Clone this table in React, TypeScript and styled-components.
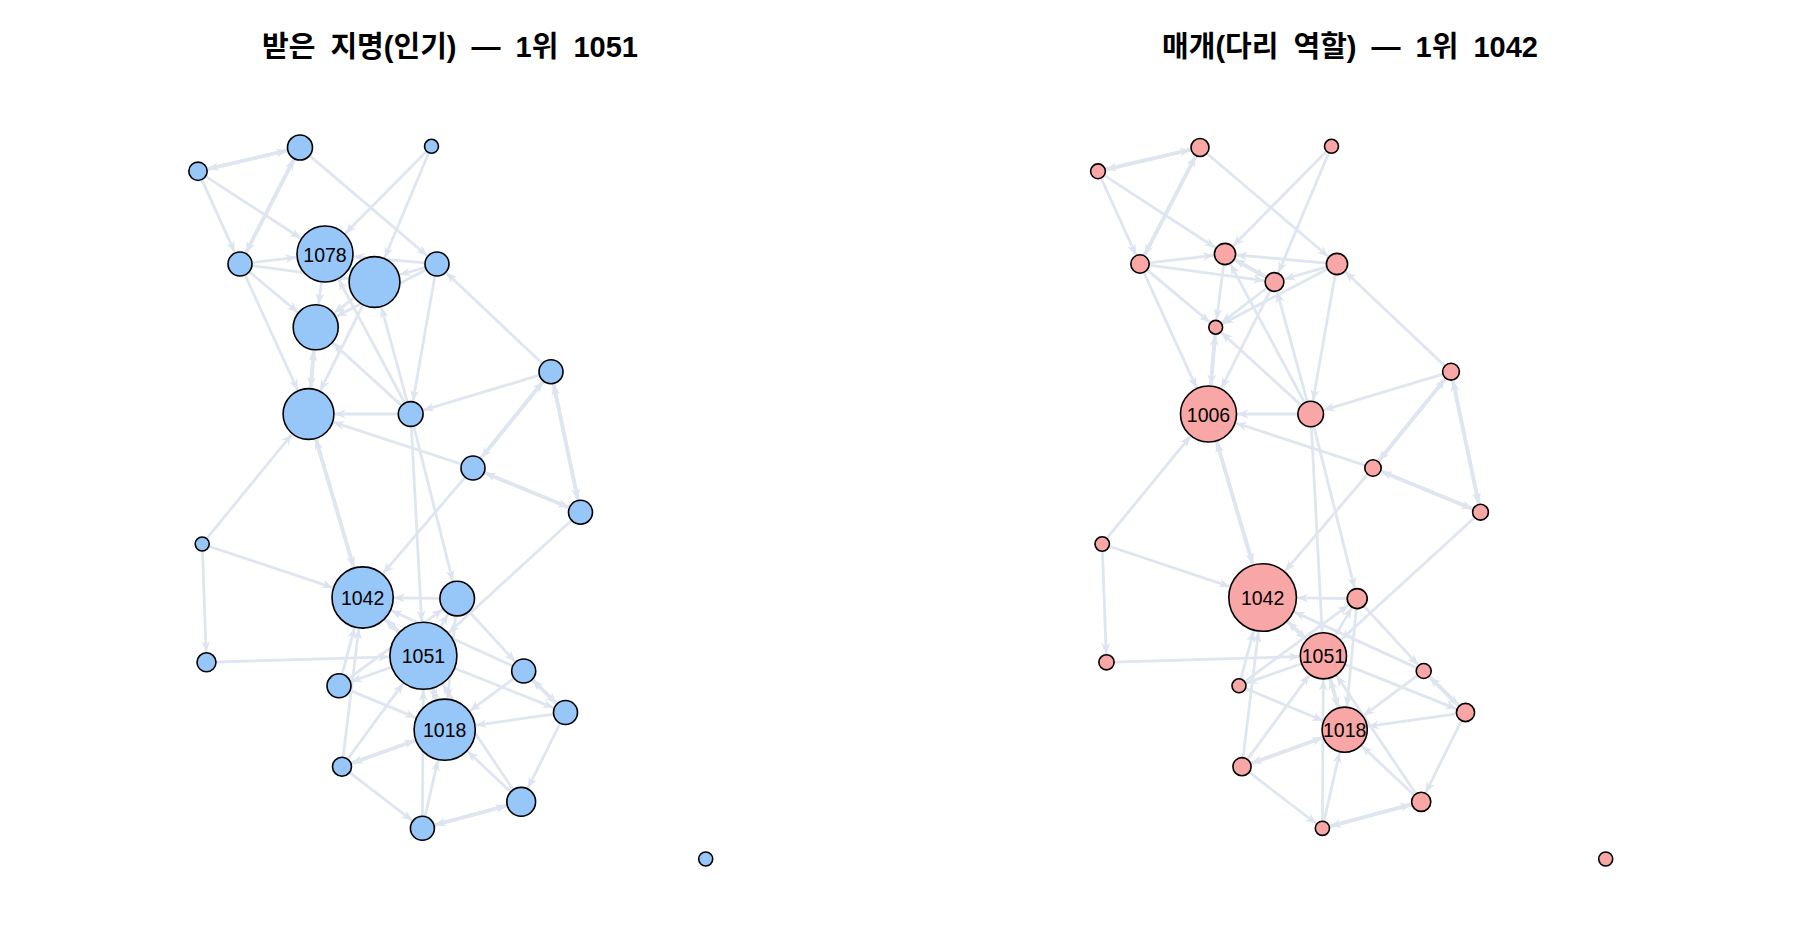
import styled, { createGlobalStyle } from "styled-components";

type Node = {
  id: string;
  x: number;
  y: number;
};

// node positions are the same in both panels, only the size changes
const nodes: Node[] = [
  { id: "A", x: 300, y: 147.5 },
  { id: "B", x: 198, y: 171.3 },
  { id: "C", x: 431.5, y: 146.3 },
  { id: "D", x: 325, y: 254 },
  { id: "E", x: 240, y: 264 },
  { id: "F", x: 374.5, y: 282 },
  { id: "G", x: 437, y: 264 },
  { id: "H", x: 315.7, y: 327.3 },
  { id: "I", x: 308.5, y: 414 },
  { id: "J", x: 410.7, y: 414 },
  { id: "K", x: 551, y: 371.7 },
  { id: "L", x: 473, y: 468 },
  { id: "M", x: 580.5, y: 512.2 },
  { id: "N", x: 202.2, y: 544 },
  { id: "O", x: 362.6, y: 597.5 },
  { id: "P", x: 457.2, y: 598.6 },
  { id: "Q", x: 423.4, y: 655.8 },
  { id: "R", x: 206.5, y: 662.3 },
  { id: "S", x: 339, y: 685.8 },
  { id: "T", x: 523.7, y: 671 },
  { id: "U", x: 565.5, y: 712.5 },
  { id: "V", x: 444.7, y: 729.7 },
  { id: "W", x: 342, y: 766.7 },
  { id: "X", x: 521.2, y: 801.8 },
  { id: "Y", x: 422.4, y: 828.3 },
  { id: "Z", x: 705.7, y: 859 },
];

// "a>b" one way, "a=b" both ways
const edges = [
  "A=B", "B>E", "B>D", "A=E", "A>G", "C>D", "C>F", "E>D", "E>F", "E>H",
  "E>I", "G>D", "G>F", "G>H", "F>H", "D>H", "H=I", "F>I", "J>D", "J>F",
  "G>J", "J>H", "J>I", "K>G", "K>J", "D=F", "K=L", "K=M", "L=M", "L>I",
  "L>O", "M>Q", "I=O", "N>I", "N>O", "N>R", "J>P", "J>Q", "R>Q", "P>O",
  "O=Q", "T>O", "Q>U", "P>T", "T>V", "T=U", "U>V", "U>X", "Q>S", "S>O",
  "S>P", "S>V", "W=V", "W>Q", "W>O", "W>Y", "Y>V", "Y>Q", "Y=X", "X>V",
  "X>Q", "Q=V", "P>V", "Q>P",
];

type Panel = {
  key: string;
  title: string;
  fill: string;
  radius: Record<string, number>;
  labels: Record<string, string>;
};

const panels: Panel[] = [
  {
    key: "indeg",
    title: "받은 지명(인기) — 1위 1051",
    fill: "#97c6f9",
    radius: {
      A: 12.5, B: 9.2, C: 7, D: 28, E: 12, F: 25.4, G: 12, H: 22.5, I: 25.4,
      J: 12.4, K: 12, L: 12, M: 12, N: 7, O: 30.6, P: 17.3, Q: 33.5, R: 9.5,
      S: 12, T: 12, U: 12, V: 30.6, W: 9.5, X: 14.4, Y: 12, Z: 7,
    },
    labels: { D: "1078", O: "1042", Q: "1051", V: "1018" },
  },
  {
    key: "betw",
    title: "매개(다리 역할) — 1위 1042",
    fill: "#f9a7a6",
    radius: {
      A: 9, B: 7.4, C: 7, D: 10.6, E: 9.2, F: 9.4, G: 10.6, H: 6.9, I: 28,
      J: 12.8, K: 8.4, L: 8.2, M: 7.9, N: 7.2, O: 33.8, P: 10, Q: 23.1, R: 7.6,
      S: 7, T: 7.5, U: 9.1, V: 22.6, W: 9.1, X: 9.6, Y: 7.1, Z: 7,
    },
    labels: { I: "1006", O: "1042", Q: "1051", V: "1018" },
  },
];

const byId = Object.fromEntries(nodes.map((n) => [n.id, n]));

const GlobalStyle = createGlobalStyle`
  html, body {
    margin: 0;
    padding: 0;
    background: #ffffff;
  }
`;

const Page = styled.div`
  display: flex;
  width: 1800px;
  height: 950px;
  background: #ffffff;
`;

const PanelBox = styled.div`
  display: flex;
  flex-direction: column;
  width: 900px;
  height: 950px;
`;

const Title = styled.h2`
  margin: 0;
  height: 80px;
  box-sizing: border-box;
  padding-top: 30px;
  font-family: "Liberation Sans", "Noto Sans CJK KR", sans-serif;
  font-size: 29px;
  font-weight: 700;
  line-height: 34px;
  word-spacing: 7px;
  text-align: center;
  color: #000000;
`;

const GraphSvg = styled.svg`
  display: block;
  width: 900px;
  height: 870px;
`;

const Edge = styled.line<{ $both: boolean }>`
  stroke: #dfe6f0;
  stroke-width: ${(p) => (p.$both ? 3.6 : 2.8)};
  stroke-linecap: butt;
`;

const Vertex = styled.circle<{ $fill: string }>`
  fill: ${(p) => p.$fill};
  stroke: #000000;
  stroke-width: 1.6;
`;

const VertexLabel = styled.text`
  font-family: "Liberation Sans", Arial, sans-serif;
  font-size: 19.5px;
  fill: #000000;
  text-anchor: middle;
  dominant-baseline: central;
`;

const Graph = ({ panel }: { panel: Panel }) => {
  const markerId = `arrow-${panel.key}`;
  const lines: { k: string; x1: number; y1: number; x2: number; y2: number; both: boolean }[] = [];

  edges.forEach((e) => {
    const both = e[1] === "=";
    const pairs = both ? [[e[0], e[2]], [e[2], e[0]]] : [[e[0], e[2]]];
    pairs.forEach(([s, t]) => {
      const a = byId[s];
      const b = byId[t];
      const dx = b.x - a.x;
      const dy = b.y - a.y;
      const len = Math.hypot(dx, dy);
      const ux = dx / len;
      const uy = dy / len;
      const rs = panel.radius[s];
      const rt = panel.radius[t] + 0.8;
      lines.push({
        k: s + t,
        x1: a.x + ux * rs,
        y1: a.y + uy * rs,
        x2: b.x - ux * rt,
        y2: b.y - uy * rt,
        both,
      });
    });
  });

  return (
    <GraphSvg viewBox="0 80 900 870">
      <defs>
        <marker
          id={markerId}
          markerUnits="userSpaceOnUse"
          markerWidth="13"
          markerHeight="11"
          refX="11"
          refY="5.5"
          orient="auto"
          viewBox="0 0 13 11"
        >
          <path d="M0,1 L11,5.5 L0,10 L3.5,5.5 Z" fill="#dde4ef" />
        </marker>
      </defs>
      {lines.map((l) => (
        <Edge
          key={l.k}
          x1={l.x1}
          y1={l.y1}
          x2={l.x2}
          y2={l.y2}
          $both={l.both}
          markerEnd={`url(#${markerId})`}
        />
      ))}
      {nodes.map((n) => (
        <Vertex key={n.id} cx={n.x} cy={n.y} r={panel.radius[n.id]} $fill={panel.fill} />
      ))}
      {nodes
        .filter((n) => panel.labels[n.id])
        .map((n) => (
          <VertexLabel key={"lbl" + n.id} x={n.x} y={n.y + 0.5}>
            {panel.labels[n.id]}
          </VertexLabel>
        ))}
    </GraphSvg>
  );
};

const App = () => {
  return (
    <>
      <GlobalStyle />
      <Page>
        {panels.map((p) => (
          <PanelBox key={p.key}>
            <Title>{p.title}</Title>
            <Graph panel={p} />
          </PanelBox>
        ))}
      </Page>
    </>
  );
};

export default App;
